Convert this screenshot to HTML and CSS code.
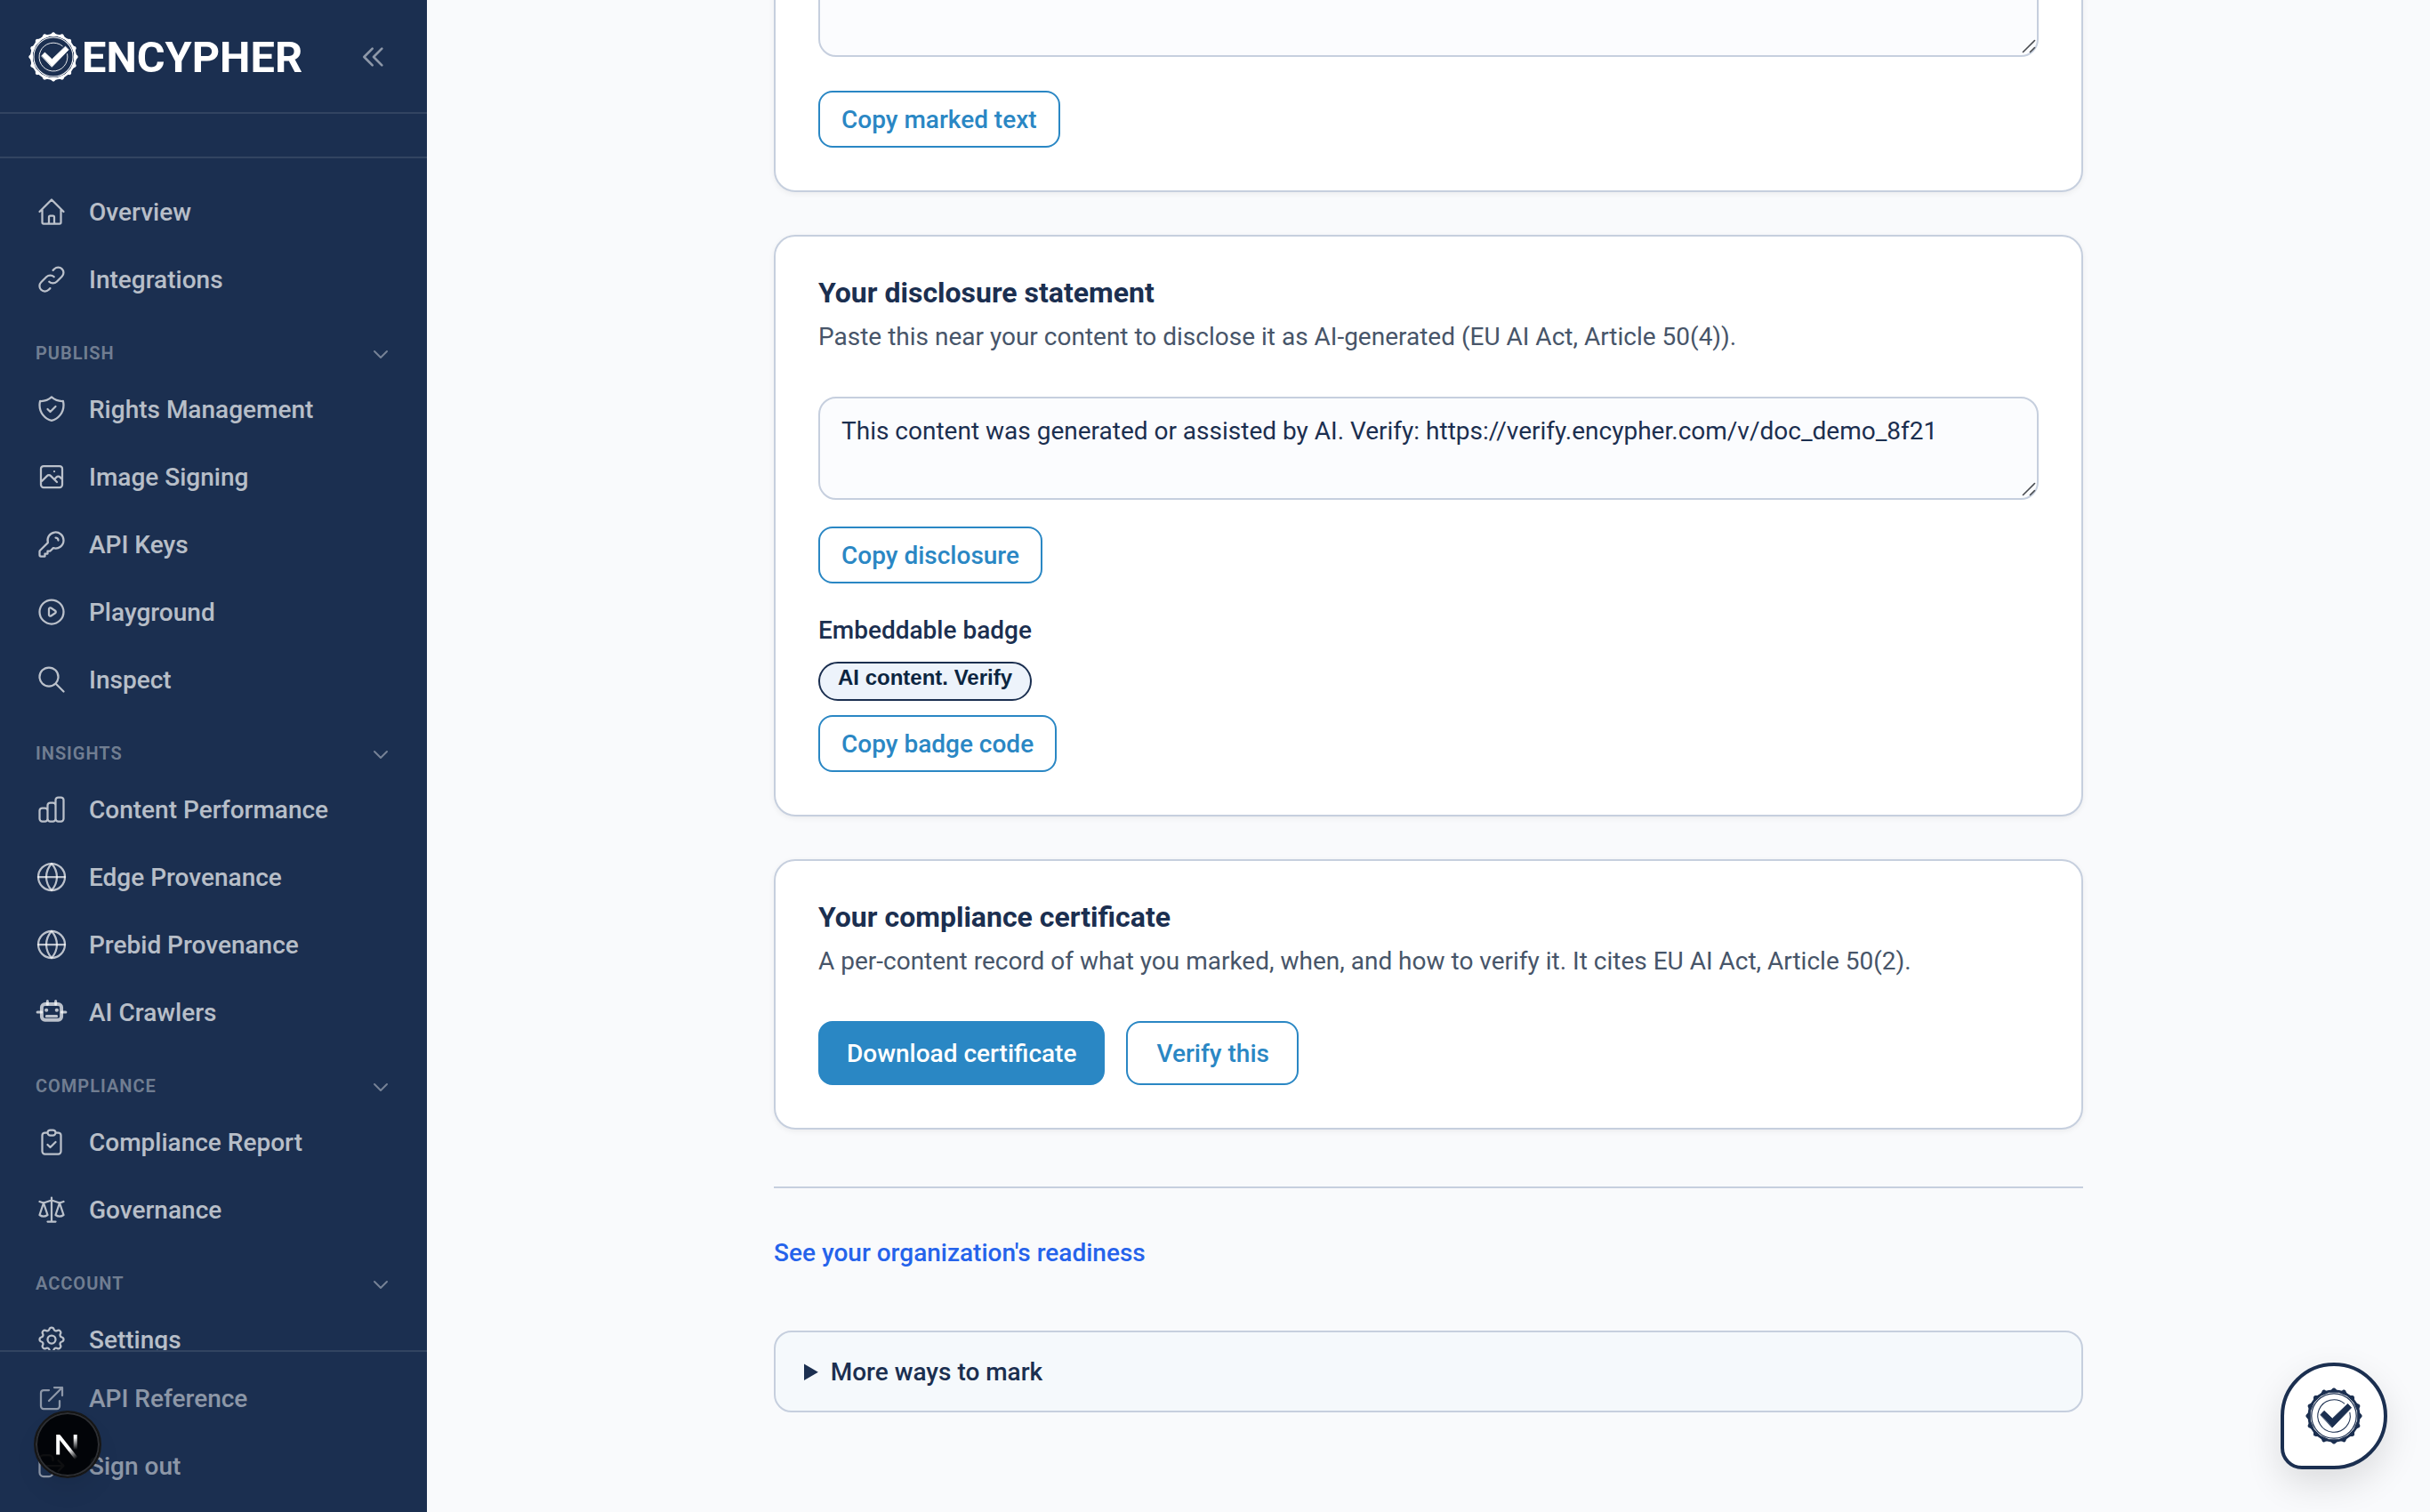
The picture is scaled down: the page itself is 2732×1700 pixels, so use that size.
FILE: index.html
```
<!DOCTYPE html>
<html lang="en">
<head>
  <meta charset="UTF-8" />
  <meta name="viewport" content="width=device-width, initial-scale=1" />
  <title>Encypher Dashboard</title>
  <link rel="stylesheet" href="styles.css">
</head>
<body>

<svg class="defs" aria-hidden="true">
  <defs>
    <path id="tooth" d="M41 5.6C43.6 5.2 45.2 4 46.6 2.6C48 .9 49 .6 50 .6S52 .9 53.4 2.6C54.8 4 56.4 5.2 59 5.6L58 9H42Z" />
    <g id="teeth">
      <use href="#tooth" />
      <use href="#tooth" transform="rotate(22.5 50 50)" />
      <use href="#tooth" transform="rotate(45 50 50)" />
      <use href="#tooth" transform="rotate(67.5 50 50)" />
    </g>
    <symbol id="seal" viewBox="0 0 100 100">
      <g fill="currentColor">
        <use href="#teeth" />
        <use href="#teeth" transform="rotate(90 50 50)" />
        <use href="#teeth" transform="rotate(180 50 50)" />
        <use href="#teeth" transform="rotate(270 50 50)" />
        <path d="M26.6 47.8L32.8 41.2L47.3 54.8L74.2 28.8L80.6 35.5L47.3 69.8Z" stroke="currentColor" stroke-width="1.5" stroke-linejoin="round" />
      </g>
      <g fill="none" stroke="currentColor">
        <circle cx="50" cy="50" r="44" stroke-width="4" />
        <circle cx="50" cy="50" r="39.4" stroke-width="1.9" />
        <path d="M77.9 44.1A28.5 28.5 0 1 1 68.3 28.2" stroke-width="1.6" />
      </g>
    </symbol>
    <symbol id="chevron" viewBox="0 0 24 24"><path d="M19 9l-7 7-7-7" /></symbol>
    <symbol id="globe" viewBox="0 0 24 24">
      <circle cx="12" cy="12" r="10" />
      <path d="M2 12h20" />
      <path d="M12 2a15.3 15.3 0 0 1 4 10 15.3 15.3 0 0 1-4 10 15.3 15.3 0 0 1-4-10 15.3 15.3 0 0 1 4-10z" />
    </symbol>
  </defs>
</svg>

<div class="layout">
  <aside class="sidebar">
    <div class="sidebar-header">
      <a class="logo" href="#"><svg class="logo-mark"><use href="#seal" /></svg><span class="logo-text">ENCYPHER</span></a>
      <button class="collapse" aria-label="Collapse sidebar">
        <svg viewBox="0 0 24 24"><path d="M11 19l-7-7 7-7m8 14l-7-7 7-7" /></svg>
      </button>
    </div>
    <div class="org-switcher"></div>

    <nav class="nav">
      <a class="nav-item" href="#">
        <svg class="icon" viewBox="0 0 24 24"><path d="M3 12l2-2m0 0l7-7 7 7M5 10v10a1 1 0 001 1h3m10-11l2 2m-2-2v10a1 1 0 01-1 1h-3m-6 0a1 1 0 001-1v-4a1 1 0 011-1h2a1 1 0 011 1v4a1 1 0 001 1m-6 0h6" /></svg>
        <span>Overview</span>
      </a>
      <a class="nav-item" href="#">
        <svg class="icon" viewBox="0 0 24 24"><path d="M13.828 10.172a4 4 0 00-5.656 0l-4 4a4 4 0 105.656 5.656l1.102-1.101m-.758-4.899a4 4 0 005.656 0l4-4a4 4 0 00-5.656-5.656l-1.1 1.1" /></svg>
        <span>Integrations</span>
      </a>

      <div class="nav-section">Publish <svg class="chevron"><use href="#chevron" /></svg></div>
      <a class="nav-item" href="#">
        <svg class="icon" viewBox="0 0 24 24"><path d="M9 12l2 2 4-4m5.618-4.016A11.955 11.955 0 0112 2.944a11.955 11.955 0 01-8.618 3.04A12.02 12.02 0 003 9c0 5.591 3.824 10.29 9 11.622 5.176-1.332 9-6.03 9-11.622 0-1.042-.133-2.052-.382-3.016z" /></svg>
        <span>Rights Management</span>
      </a>
      <a class="nav-item" href="#">
        <svg class="icon" viewBox="0 0 24 24"><path d="M4 16l4.586-4.586a2 2 0 012.828 0L16 16m-2-2l1.586-1.586a2 2 0 012.828 0L20 14m-6-6h.01M6 20h12a2 2 0 002-2V6a2 2 0 00-2-2H6a2 2 0 00-2 2v12a2 2 0 002 2z" /></svg>
        <span>Image Signing</span>
      </a>
      <a class="nav-item" href="#">
        <svg class="icon" viewBox="0 0 24 24"><path d="M15 7a2 2 0 012 2m4 0a6 6 0 01-7.743 5.743L11 17H9v2H7v2H4a1 1 0 01-1-1v-2.586a1 1 0 01.293-.707l5.964-5.964A6 6 0 1121 9z" /></svg>
        <span>API Keys</span>
      </a>
      <a class="nav-item" href="#">
        <svg class="icon" viewBox="0 0 24 24"><path d="M14.752 11.168l-3.197-2.132A1 1 0 0010 9.87v4.263a1 1 0 001.555.832l3.197-2.132a1 1 0 000-1.664z" /><path d="M21 12a9 9 0 11-18 0 9 9 0 0118 0z" /></svg>
        <span>Playground</span>
      </a>
      <a class="nav-item" href="#">
        <svg class="icon" viewBox="0 0 24 24"><path d="M21 21l-6-6m2-5a7 7 0 11-14 0 7 7 0 0114 0z" /></svg>
        <span>Inspect</span>
      </a>

      <div class="nav-section">Insights <svg class="chevron"><use href="#chevron" /></svg></div>
      <a class="nav-item" href="#">
        <svg class="icon" viewBox="0 0 24 24"><path d="M9 19v-6a2 2 0 00-2-2H5a2 2 0 00-2 2v6a2 2 0 002 2h2a2 2 0 002-2zm0 0V9a2 2 0 012-2h2a2 2 0 012 2v10m-6 0a2 2 0 002 2h2a2 2 0 002-2m0 0V5a2 2 0 012-2h2a2 2 0 012 2v14a2 2 0 01-2 2h-2a2 2 0 01-2-2z" /></svg>
        <span>Content Performance</span>
      </a>
      <a class="nav-item" href="#">
        <svg class="icon"><use href="#globe" /></svg>
        <span>Edge Provenance</span>
      </a>
      <a class="nav-item" href="#">
        <svg class="icon"><use href="#globe" /></svg>
        <span>Prebid Provenance</span>
      </a>
      <a class="nav-item" href="#">
        <svg class="icon robot" viewBox="0 0 24 24">
          <rect class="robot-head" x="4.6" y="6" width="14.8" height="11.8" rx="2.4" />
          <path d="M8.9 3.7v2.4M15.1 3.7v2.4M1.4 12h3M19.6 12h3M8.2 15h7.6" />
          <circle class="robot-eye" cx="8.1" cy="10.5" r="1.4" />
          <circle class="robot-eye" cx="15.9" cy="10.5" r="1.4" />
        </svg>
        <span>AI Crawlers</span>
      </a>

      <div class="nav-section">Compliance <svg class="chevron"><use href="#chevron" /></svg></div>
      <a class="nav-item" href="#">
        <svg class="icon" viewBox="0 0 24 24"><path d="M9 5H7a2 2 0 00-2 2v12a2 2 0 002 2h10a2 2 0 002-2V7a2 2 0 00-2-2h-2M9 5a2 2 0 002 2h2a2 2 0 002-2M9 5a2 2 0 012-2h2a2 2 0 012 2m-6 9l2 2 4-4" /></svg>
        <span>Compliance Report</span>
      </a>
      <a class="nav-item" href="#">
        <svg class="icon" viewBox="0 0 24 24"><path d="M3 6l3 1m0 0l-3 9a5.002 5.002 0 006.001 0M6 7l3 9M6 7l6-2m6 2l3-1m-3 1l-3 9a5.002 5.002 0 006.001 0M18 7l3 9m-3-9l-6-2m0-2v2m0 16V5m0 16H9m3 0h3" /></svg>
        <span>Governance</span>
      </a>

      <div class="nav-section">Account <svg class="chevron"><use href="#chevron" /></svg></div>
      <a class="nav-item" href="#">
        <svg class="icon" viewBox="0 0 24 24"><path d="M10.325 4.317c.426-1.756 2.924-1.756 3.35 0a1.724 1.724 0 002.573 1.066c1.543-.94 3.31.826 2.37 2.37a1.724 1.724 0 001.065 2.572c1.756.426 1.756 2.924 0 3.35a1.724 1.724 0 00-1.066 2.573c.94 1.543-.826 3.31-2.37 2.37a1.724 1.724 0 00-2.572 1.065c-.426 1.756-2.924 1.756-3.35 0a1.724 1.724 0 00-2.573-1.066c-1.543.94-3.31-.826-2.37-2.37a1.724 1.724 0 00-1.065-2.572c-1.756-.426-1.756-2.924 0-3.35a1.724 1.724 0 001.066-2.573c-.94-1.543.826-3.31 2.37-2.37.996.608 2.296.07 2.572-1.065z" /><path d="M15 12a3 3 0 11-6 0 3 3 0 016 0z" /></svg>
        <span>Settings</span>
      </a>
    </nav>

    <div class="sidebar-footer">
      <a class="nav-item" href="#">
        <svg class="icon" viewBox="0 0 24 24"><path d="M10 6H6a2 2 0 00-2 2v10a2 2 0 002 2h10a2 2 0 002-2v-4M14 4h6m0 0v6m0-6L10 14" /></svg>
        <span>API Reference</span>
      </a>
      <a class="nav-item" href="#">
        <svg class="icon" viewBox="0 0 24 24"><path d="M17 16l4-4m0 0l-4-4m4 4H7m6 4v1a3 3 0 01-3 3H6a3 3 0 01-3-3V7a3 3 0 013-3h4a3 3 0 013 3v1" /></svg>
        <span>Sign out</span>
      </a>
    </div>
  </aside>

  <main class="main">
    <div class="content">
      <section class="card card-marked">
        <div class="field">
          <textarea class="output output-marked" readonly></textarea>
          <svg class="grip" viewBox="0 0 18 18"><path d="M1.5 14.5L14.5 1.5M9.5 14.5L14.5 9.5" /></svg>
        </div>
        <button class="btn btn-sm">Copy marked text</button>
      </section>

      <section class="card">
        <h2>Your disclosure statement</h2>
        <p class="desc">Paste this near your content to disclose it as AI-generated (EU AI Act, Article 50(4)).</p>
        <div class="field">
          <textarea class="output" rows="2" readonly>This content was generated or assisted by AI. Verify: https://verify.encypher.com/v/doc_demo_8f21</textarea>
          <svg class="grip" viewBox="0 0 18 18"><path d="M1.5 14.5L14.5 1.5M9.5 14.5L14.5 9.5" /></svg>
        </div>
        <button class="btn btn-sm btn-disclosure">Copy disclosure</button>
        <p class="label">Embeddable badge</p>
        <div class="badge">AI content. Verify</div>
        <button class="btn btn-sm">Copy badge code</button>
      </section>

      <section class="card">
        <h2>Your compliance certificate</h2>
        <p class="desc">A per-content record of what you marked, when, and how to verify it. It cites EU AI Act, Article 50(2).</p>
        <div class="actions">
          <button class="btn btn-primary">Download certificate</button>
          <button class="btn">Verify this</button>
        </div>
      </section>

      <div class="readiness">
        <a href="#">See your organization's readiness</a>
      </div>

      <details class="more">
        <summary>More ways to mark</summary>
      </details>
    </div>
  </main>
</div>

<button class="chat-button" aria-label="Open chat"><svg><use href="#seal" /></svg></button>

<div class="dev-badge">
  <svg viewBox="0 0 40 40">
    <defs>
      <linearGradient id="fadeDiag" gradientUnits="userSpaceOnUse" x1="20" y1="20" x2="32" y2="34">
        <stop offset="0.3" stop-color="#fff" />
        <stop offset="1" stop-color="#fff" stop-opacity="0" />
      </linearGradient>
      <linearGradient id="fadeStem" gradientUnits="userSpaceOnUse" x1="0" y1="9" x2="0" y2="26">
        <stop offset="0.2" stop-color="#fff" />
        <stop offset="1" stop-color="#fff" stop-opacity="0" />
      </linearGradient>
    </defs>
    <path d="M9.2 31.5V9" stroke="#fff" />
    <path d="M10 10.6L30.5 36.4" stroke="url(#fadeDiag)" />
    <path d="M28.7 9V26" stroke="url(#fadeStem)" />
  </svg>
</div>

</body>
</html>
```
FILE: styles.css
```
* {
  box-sizing: border-box;
}

body {
  margin: 0;
  font-family: Roboto, "Liberation Sans", sans-serif;
  font-size: 28px;
  line-height: 40px;
  color: #1b2f50;
  background: #f9fafc;
  overflow: hidden;
}

a {
  text-decoration: none;
}

button,
textarea {
  font: inherit;
}

svg {
  display: block;
  fill: none;
  stroke-linecap: round;
  stroke-linejoin: round;
}

.defs {
  position: absolute;
  width: 0;
  height: 0;
}

.layout {
  display: flex;
  height: 1700px;
}

/* sidebar */
.sidebar {
  display: flex;
  flex-direction: column;
  width: 480px;
  flex-shrink: 0;
  background: #1b2f50;
  color: #fff;
}

.sidebar-header {
  display: flex;
  align-items: center;
  justify-content: space-between;
  height: 128px;
  padding: 2px 32px 0;
  border-bottom: 2px solid rgba(255, 255, 255, 0.1);
}

.logo {
  display: flex;
  align-items: center;
  gap: 4px;
  color: #fff;
}

.logo-mark {
  width: 56px;
  height: 56px;
}

.logo-text {
  padding-top: 1px;
  font-size: 48.7px;
  font-weight: 700;
}

.collapse {
  padding: 12px;
  border: none;
  background: none;
  color: rgba(255, 255, 255, 0.5);
}

.collapse svg {
  width: 32px;
  height: 32px;
  stroke: currentColor;
  stroke-width: 2;
}

.org-switcher {
  height: 50px;
  border-bottom: 2px solid rgba(255, 255, 255, 0.1);
}

.nav {
  flex: 1;
  min-height: 0;
  overflow: hidden;
  display: flex;
  flex-direction: column;
  gap: 4px;
  padding: 24px 24px 0;
}

.nav-item {
  display: flex;
  align-items: center;
  gap: 24px;
  flex-shrink: 0;
  height: 72px;
  padding: 0 16px;
  font-weight: 500;
  color: rgba(255, 255, 255, 0.7);
}

.nav-item span {
  padding-top: 2px;
}

.icon {
  width: 36px;
  height: 36px;
  stroke: currentColor;
  stroke-width: 1.5;
}

.robot {
  overflow: visible;
  stroke-width: 2;
}

.robot-head {
  stroke-width: 2.6;
}

.robot-eye {
  fill: currentColor;
  stroke: none;
}

.nav-section {
  display: flex;
  align-items: center;
  justify-content: space-between;
  flex-shrink: 0;
  height: 46px;
  margin-top: 20px;
  padding: 0 16px;
  font-size: 20px;
  font-weight: 600;
  letter-spacing: 1px;
  text-transform: uppercase;
  color: rgba(255, 255, 255, 0.4);
}

.chevron {
  width: 24px;
  height: 24px;
  margin-top: 2px;
  stroke: currentColor;
  stroke-width: 2;
}

.sidebar-footer {
  display: flex;
  flex-direction: column;
  gap: 4px;
  padding: 16px 24px;
  border-top: 2px solid rgba(255, 255, 255, 0.1);
}

.sidebar-footer .nav-item {
  color: rgba(255, 255, 255, 0.5);
}

/* main column */
.main {
  flex: 1;
  display: flex;
  justify-content: center;
}

.content {
  width: 1472px;
}

.card {
  margin-bottom: 48px;
  padding: 48px;
  background: #fff;
  border: 2px solid #c6cfde;
  border-radius: 24px;
  box-shadow: 0 2px 6px rgba(0, 0, 0, 0.06);
}

/* scrolled past the top edge */
.card-marked {
  margin-top: -186px;
}

h2 {
  margin: -1px 0 13px;
  font-size: 32px;
  line-height: 32px;
  font-weight: 700;
}

.desc {
  margin: 0 0 46px;
  line-height: 42px;
  color: #475569;
}

.field {
  position: relative;
  margin-bottom: 30px;
}

.card-marked .field {
  margin-bottom: 38px;
}

.output {
  display: block;
  width: 100%;
  height: 116px;
  padding: 17px 24px 15px;
  border: 2px solid #c6cfde;
  border-radius: 20px;
  background: #fbfcfe;
  color: #1b2f50;
  resize: none;
  outline: none;
  overflow: hidden;
}

.output-marked {
  height: 200px;
}

.grip {
  position: absolute;
  right: 1px;
  bottom: 2px;
  width: 18px;
  height: 18px;
  stroke: #4a4d52;
  stroke-width: 1.6;
}

.btn {
  display: block;
  height: 72px;
  padding: 2px 31px 0 32px;
  border: 2px solid #2a87c4;
  border-radius: 16px;
  background: #fff;
  color: #2a87c4;
  font-weight: 500;
}

.btn-sm {
  height: 64px;
  padding: 2px 24px 0;
}

.btn-primary {
  padding: 2px 30px 0;
  background: #2a87c4;
  color: #fff;
}

.btn-disclosure {
  margin-bottom: 32px;
}

.label {
  margin: 0 0 14px;
  line-height: 42px;
  font-weight: 500;
}

.badge {
  width: 240px;
  height: 44px;
  margin-bottom: 16px;
  border: 2px solid #1b2f50;
  border-radius: 22px;
  background: #edf3fb;
  color: #0b2540;
  font-family: "Liberation Sans", Arial, sans-serif;
  font-size: 24px;
  line-height: 32px;
  font-weight: 700;
  text-align: center;
}

.actions {
  display: flex;
  gap: 24px;
}

.readiness {
  margin-top: 64px;
  padding-top: 53px;
  border-top: 2px solid #c6cfde;
}

.readiness a {
  color: #2563eb;
  font-weight: 500;
}

.more {
  margin-top: 67px;
  padding: 25px 32px 23px;
  border: 2px solid #c6cfde;
  border-radius: 20px;
  background: #f5f9fc;
}

.more summary {
  font-weight: 500;
}

/* floating things */
.chat-button {
  position: fixed;
  right: 48px;
  bottom: 48px;
  display: flex;
  align-items: center;
  justify-content: center;
  width: 120px;
  height: 120px;
  padding: 0;
  border: 4px solid #1b2f50;
  border-radius: 60px 60px 60px 24px;
  background: #fff;
  color: #1b2f50;
  box-shadow: 0 16px 40px rgba(0, 0, 0, 0.12);
}

.chat-button svg {
  width: 64px;
  height: 64px;
}

.dev-badge {
  position: fixed;
  left: 38px;
  bottom: 38px;
  display: flex;
  align-items: center;
  justify-content: center;
  width: 76px;
  height: 76px;
  border: 2px solid #171717;
  border-radius: 50%;
  background: rgba(0, 0, 0, 0.9);
  box-shadow: inset 0 0 0 2px #2d2f33, 0 16px 32px -8px rgba(0, 0, 0, 0.1);
}

.dev-badge svg {
  width: 40px;
  height: 40px;
  stroke-width: 4;
  stroke-linecap: butt;
}
```
